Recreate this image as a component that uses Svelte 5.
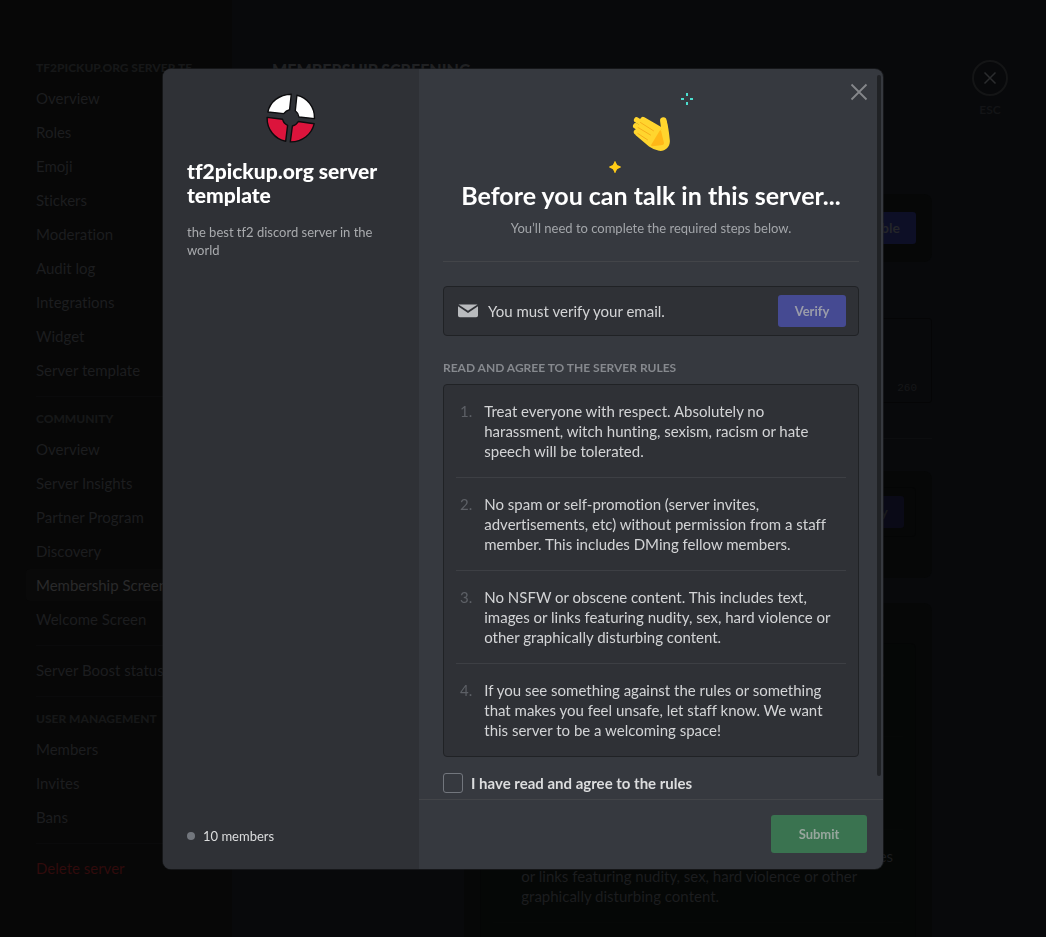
<script>
  const sections = [
    {
      title: 'tf2pickup.org server template',
      items: ['Overview', 'Roles', 'Emoji', 'Stickers', 'Moderation', 'Audit log', 'Integrations', 'Widget', 'Server template'],
    },
    {
      title: 'Community',
      items: ['Overview', 'Server Insights', 'Partner Program', 'Discovery', 'Membership Screening', 'Welcome Screen'],
    },
    { title: '', items: ['Server Boost status'] },
    { title: 'User management', items: ['Members', 'Invites', 'Bans'] },
    { title: '', items: ['Delete server'] },
  ];

  const rules = [
    'Treat everyone with respect. Absolutely no harassment, witch hunting, sexism, racism or hate speech will be tolerated.',
    'No spam or self-promotion (server invites, advertisements, etc) without permission from a staff member. This includes DMing fellow members.',
    'No NSFW or obscene content. This includes text, images or links featuring nudity, sex, hard violence or other graphically disturbing content.',
    'If you see something against the rules or something that makes you feel unsafe, let staff know. We want this server to be a welcoming space!',
  ];

  let agreed = $state(false);
</script>

{#snippet ruleList()}
  <ol class="rules">
    {#each rules as rule, i}
      <li><span class="num">{i + 1}.</span><span class="rule">{rule}</span></li>
    {/each}
  </ol>
{/snippet}

<div class="settings" inert>
  <nav class="sidebar">
    {#each sections as section}
      <section>
        {#if section.title}<h3>{section.title}</h3>{/if}
        {#each section.items as item}
          <a
            href="#settings"
            class:selected={item === 'Membership Screening'}
            class:danger={item === 'Delete server'}>{item}</a>
        {/each}
      </section>
    {/each}
  </nav>
  <main class="content">
    <h2>Membership Screening</h2>
    <div class="card enable"><button class="fill">Enable</button></div>
    <div class="description"><span>260</span></div>
    <hr />
    <div class="steps">
      <div class="card">
        <div class="box step"><button class="fill faint">Verify</button></div>
      </div>
      <div class="card preview">{@render ruleList()}</div>
    </div>
  </main>
  <aside class="escape">
    <button class="esc" aria-label="Close settings">
      <svg viewBox="0 0 36 36" width="36" height="36" fill="none" stroke="currentColor">
        <circle cx="18" cy="18" r="17" stroke-width="2" stroke="#141516" />
        <path d="M12.5 12.5l11 11M23.5 12.5l-11 11" stroke-width="1.5" />
      </svg>
    </button>
    <span>ESC</span>
  </aside>
</div>

<div class="overlay">
  <div class="modal" role="dialog" aria-modal="true" aria-labelledby="modal-title">
    <aside class="server">
      <svg class="logo" viewBox="0 0 50 50" width="50" height="50" stroke="#0c0c0e" stroke-width="1.4" stroke-linejoin="round">
        <path fill="#fff" d="M25.300 1.200 23.600 16.600Q20 17.600 17.700 20.600L1.900 19C3.900 9 13 1.400 25.300 1.200Z" />
        <path fill="#fff" d="M30.900 2.300C41 4.500 48.900 14 48.500 25.600L33 24Q32.300 20 29.300 17.800Z" />
        <path fill="#dc143c" d="M1.100 24.400 16.600 26.300Q17.700 30.600 21.600 32.300L19.700 48.200C8.700 46.100.8 36.300 1.100 24.400Z" />
        <path fill="#dc143c" d="M32.300 28.500 48.200 30.700C45.800 41.200 36.600 49.100 24.300 48.900L26.400 33Q30.200 32.200 32.300 28.500Z" />
      </svg>
      <h1>tf2pickup.org server template</h1>
      <p>the best tf2 discord server in the world</p>
      <div class="members"><i></i>10 members</div>
    </aside>

    <form class="gate" onsubmit={(e) => e.preventDefault()}>
      <button type="button" class="close" aria-label="Close">
        <svg viewBox="0 0 18 18" width="18" height="18" fill="none" stroke="currentColor" stroke-width="1.8">
          <path d="M1.5 1.5l15 15M16.5 1.5l-15 15" />
        </svg>
      </button>
      <div class="thumb"></div>

      <div class="body">
        <header>
          <svg class="art" viewBox="0 3 80 84" width="80" height="84">
            <g fill="#4cdfcf">
              <rect x="75" y="3" width="2" height="3" /><rect x="75" y="12" width="2" height="3" />
              <rect x="70" y="8" width="3" height="2" /><rect x="79" y="8" width="3" height="2" />
            </g>
            <path fill="#ffcc17" d="M4 71Q4.600 71 4.900 72.500Q5.600 75.400 8.500 76.100Q10 76.400 10 77Q10 77.600 8.500 77.900Q5.600 78.600 4.900 81.500Q4.600 83 4 83Q3.400 83 3.100 81.500Q2.400 78.600-.5 77.900Q-2 77.600-2 77Q-2 76.400-.5 76.100Q2.400 75.400 3.100 72.500Q3.400 71 4 71Z" />
            <g fill="none" stroke="#ffd52e" stroke-linecap="round">
              <path stroke-width="5.600" d="M25.700 30 43 41M24.800 36 42 47M25.600 42 39 50M32 29.600 48 39" />
              <path stroke-width="6.500" d="M52.300 30.500 54 43" />
            </g>
            <path fill="#ffd52e" d="M33 29 51 40 55.500 30Q57.500 37 58.800 50C59.600 57 54 61.600 48 60.800Q43 60 38 56.500L24.500 45 28 34Z" />
            <path fill="#ffb717" d="M50 40.500Q51.200 46 53 53Q53.300 54.600 51.500 54.900L41.500 56.200Q39.300 56 40.500 54.200L48.500 41Q49.500 39.700 50 40.500Z" />
            <path fill="none" stroke="#f5ae1b" stroke-width="1" stroke-linecap="round" d="M29.500 32.500 42.500 40.800M27 37.500 39.500 45M26.800 43.500 36.500 49.800" />
          </svg>
          <h2 id="modal-title">Before you can talk in this server...</h2>
          <p>You’ll need to complete the required steps below.</p>
        </header>

        <div class="box verify">
          <svg viewBox="0 0 20 14" width="20" height="14" fill="#b9bbbe">
            <path d="M.5.500h19L10 6.800Z" />
            <path d="M0 2.300 10 9l10-6.700V11.500A1.800 1.800 0 0 1 18.200 13.300H1.800A1.800 1.800 0 0 1 0 11.500Z" />
          </svg>
          <span>You must verify your email.</span>
          <button type="button" class="primary">Verify</button>
        </div>

        <h3>Read and agree to the server rules</h3>
        <div class="box">{@render ruleList()}</div>

        <label class="agree">
          <input type="checkbox" bind:checked={agreed} />
          I have read and agree to the rules
        </label>
      </div>

      <footer><button class="submit">Submit</button></footer>
    </form>
  </div>
</div>

<style>
  :global(body) {
    margin: 0;
    background: #08090b;
    overflow: hidden;
  }
  :global(#app) {
    font-family: Lato, 'Open Sans', sans-serif;
    font-size: 15px;
    line-height: 20px;
    font-variant-ligatures: none;
  }
  h1, h2, h3, p, ol {
    margin: 0;
    padding: 0;
  }
  button {
    font: inherit;
    border: 0;
    padding: 0;
    border-radius: 3px;
    cursor: pointer;
  }
  svg {
    display: block;
    flex: none;
  }

  .settings {
    display: flex;
    height: 100vh;
    overflow: hidden;
    color: #1c1d1f;
  }
  .sidebar {
    box-sizing: border-box;
    flex: 0 0 232px;
    min-width: 0;
    padding: 54px 6px 0 26px;
    background: #070707;
  }
  .sidebar section {
    display: flex;
    flex-direction: column;
  }
  .sidebar section + section {
    margin-top: 8px;
  }
  .sidebar section + section::before {
    content: '';
    height: 1px;
    margin: 0 10px 8px;
    background: #0a0a0b;
  }
  .sidebar h3 {
    padding: 0 16px 0 10px;
    overflow: hidden;
    font-size: 12px;
    font-weight: 900;
    line-height: 28px;
    text-overflow: ellipsis;
    text-transform: uppercase;
    white-space: nowrap;
    color: #161718;
  }
  .sidebar a {
    margin-bottom: 2px;
    padding: 6px 10px;
    border-radius: 4px;
    color: inherit;
    text-decoration: none;
    white-space: nowrap;
  }
  .sidebar a.selected {
    background: #090909;
    color: #2a2a2b;
  }
  .sidebar a.danger {
    color: #300b0c;
  }
  .content {
    flex: 0 1 660px;
    padding: 60px 0 0 40px;
  }
  .content h2 {
    font-size: 16px;
    font-weight: 900;
    text-transform: uppercase;
    color: #202123;
  }
  .card {
    box-sizing: border-box;
    padding: 16px;
    border-radius: 8px;
    background: #060707;
  }
  .enable {
    display: flex;
    justify-content: flex-end;
    margin-top: 114px;
    padding: 18px 16px;
  }
  .fill {
    height: 32px;
    padding: 0 16px;
    font-size: 14px;
    font-weight: 700;
    background: #0d0f26;
    color: #242529;
  }
  .faint {
    background: #0a0a17;
    color: #191a1c;
  }
  .description {
    display: flex;
    align-items: flex-end;
    justify-content: flex-end;
    box-sizing: border-box;
    height: 85px;
    margin-top: 56px;
    padding: 4px 14px;
    border: 1px solid #050506;
    border-radius: 3px;
    font-family: 'Liberation Mono', monospace;
    font-size: 11px;
    color: #161719;
  }
  .content hr {
    height: 1px;
    margin: 35px 0 32px;
    border: 0;
    background: #0c0d0f;
  }
  .steps {
    display: grid;
    gap: 25px;
    padding-left: 192px;
  }
  .steps .card {
    min-height: 107px;
  }
  .steps .step {
    display: flex;
    justify-content: flex-end;
    padding: 8px 11px;
    border-color: #040505;
    background: #060707;
  }
  .steps .preview {
    padding-top: 40px;
  }
  .preview .rules {
    background: #050706;
    border: 1px solid #040505;
    border-radius: 5px;
  }
  .escape {
    display: flex;
    flex-direction: column;
    align-items: center;
    gap: 4px;
    margin-left: 40px;
    padding-top: 60px;
    font-size: 12px;
    font-weight: 700;
    color: #131416;
  }
  .esc {
    background: none;
    color: #2b2c2e;
  }

  .overlay {
    position: fixed;
    inset: 0;
    display: flex;
    align-items: center;
    justify-content: center;
  }
  .modal {
    display: grid;
    grid-template-columns: 256px 1fr;
    width: min(720px, 100%);
    overflow: hidden;
    border-radius: 8px;
    background: #36393f;
    box-shadow: 0 0 0 1px rgb(32 34 37 / 60%);
  }
  .server {
    display: flex;
    flex-direction: column;
    padding: 24px;
    background: #2f3136;
    font-size: 13px;
    line-height: 18px;
    color: #a9abae;
  }
  .logo {
    align-self: center;
  }
  .server h1 {
    margin: 16px 0;
    font-size: 21px;
    font-weight: 900;
    line-height: 24px;
    color: #fff;
  }
  .members {
    display: flex;
    align-items: center;
    gap: 8px;
    margin-top: auto;
    color: #dcddde;
  }
  .members i {
    width: 8px;
    height: 8px;
    border-radius: 50%;
    background: #72767d;
  }
  .gate {
    position: relative;
    display: flex;
    flex-direction: column;
    min-width: 0;
  }
  .close {
    position: absolute;
    top: 14px;
    right: 15px;
    background: none;
    color: #85878b;
  }
  .thumb {
    position: absolute;
    top: 6px;
    right: 2px;
    bottom: 93px;
    width: 4px;
    border-radius: 4px;
    background: #202225;
  }
  .body {
    padding: 24px 24px 6px;
    color: #d3d4d6;
  }
  header {
    display: flex;
    flex-direction: column;
    align-items: center;
    padding-bottom: 23px;
    border-bottom: 1px solid #434549;
    text-align: center;
  }
  .art {
    overflow: visible;
  }
  header h2 {
    margin: 4px 0 9px;
    font-size: 25px;
    font-weight: 700;
    line-height: 28px;
    color: #fff;
  }
  header p {
    font-size: 13px;
    line-height: 20px;
    color: #a3a6aa;
  }
  .box {
    border: 1px solid #202225;
    border-radius: 4px;
    background: #2f3136;
  }
  .verify {
    display: flex;
    align-items: center;
    gap: 10px;
    margin: 24px 0;
    padding: 8px 12px 8px 14px;
  }
  .primary {
    width: 68px;
    height: 32px;
    margin-left: auto;
    font-size: 13px;
    font-weight: 700;
    background: #454a92;
    color: #9a9caa;
  }
  .body h3 {
    margin-bottom: 8px;
    font-size: 12px;
    font-weight: 700;
    line-height: 16px;
    text-transform: uppercase;
    color: #86898e;
  }
  .rules {
    padding: 0 12px;
    list-style: none;
  }
  .rules li {
    display: flex;
    gap: 12px;
    padding: 16px 8px 16px 4px;
  }
  .rules li + li {
    border-top: 1px solid #3d3f44;
  }
  .num {
    color: #5d6066;
  }
  .preview .rules li {
    padding-right: 0;
  }
  .preview .rules li + li {
    border-color: #060807;
  }
  .preview .num {
    color: #111312;
  }
  .agree {
    display: flex;
    align-items: center;
    gap: 8px;
    margin-top: 16px;
    font-weight: 700;
    color: #dcddde;
  }
  .agree input {
    appearance: none;
    width: 20px;
    height: 20px;
    margin: 0;
    border: 1px solid #72767d;
    border-radius: 3px;
  }
  .agree input:checked {
    background: #5865f2;
  }
  footer {
    display: flex;
    justify-content: flex-end;
    padding: 15px 16px 16px;
    border-top: 1px solid #434549;
  }
  .submit {
    width: 96px;
    height: 38px;
    font-size: 13px;
    font-weight: 700;
    background: #3a7350;
    color: #97a69d;
  }
</style>
